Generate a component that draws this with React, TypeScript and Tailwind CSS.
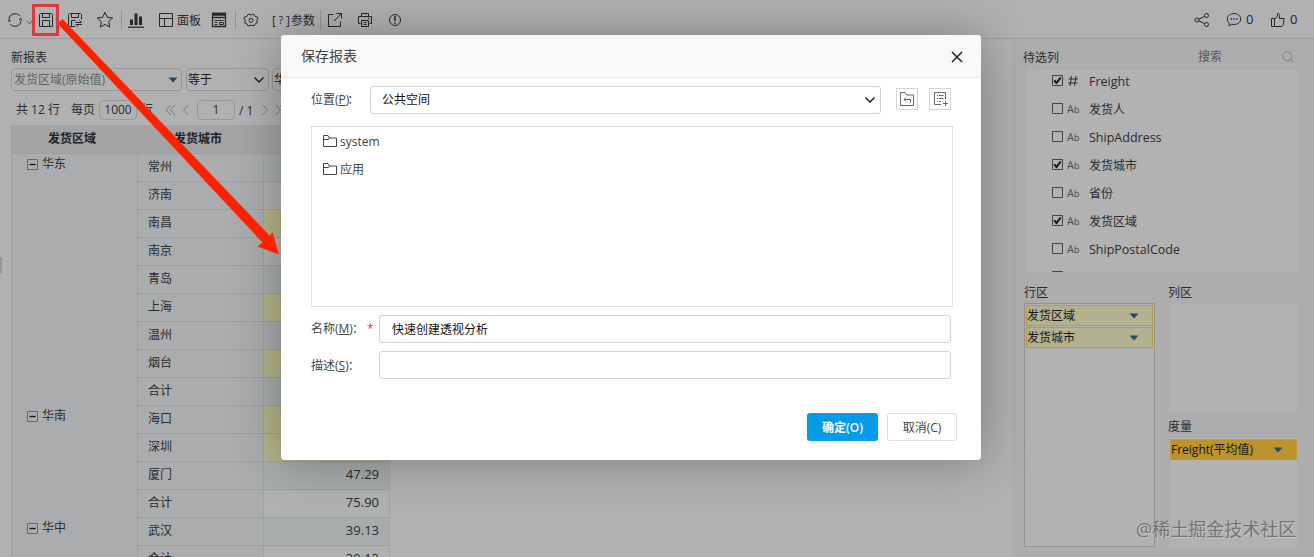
import type { ReactNode } from "react";

const Svg = ({ w = 16, h = 16, children, className = "" }: { w?: number; h?: number; children: ReactNode; className?: string }) => (
  <svg width={w} height={h} viewBox={`0 0 ${w} ${h}`} fill="none" stroke="currentColor" strokeWidth="1" className={`block shrink-0 ${className}`}>
    {children}
  </svg>
);

const Divider = ({ className = "" }: { className?: string }) => <div className={`h-5 w-px shrink-0 bg-[#949494] ${className}`} />;

const Caret = ({ className = "" }: { className?: string }) => (
  <Svg w={10} h={6} className={className}>
    <path d="M0.5 0.5h9L5 5.5z" fill="#1f4a66" stroke="none" />
  </Svg>
);

const Chevron = ({ className = "" }: { className?: string }) => (
  <Svg w={12} h={8} className={className}>
    <path d="M1.5 1.5l4.500 4.500 4.500-4.500" strokeWidth="1.3" />
  </Svg>
);

const Toolbar = () => (
  <header className="flex h-[39px] shrink-0 items-center border-b border-[#9c9c9c] pl-[7px] pr-[17px] pt-[2px] text-[#25282d]">
    <Svg>
      <path d="M1.800 7.500A6.300 6.300 0 0 1 12.800 3.700M14.200 8.500A6.300 6.300 0 0 1 3.200 12.300" />
      <path d="M13.800 5.500L14.300 8 12 7.300M2.200 10.500L1.700 8 4 8.700" strokeWidth="0.800" />
    </Svg>
    <Svg w={7} h={5} className="ml-[3px] mt-1 text-[#555]">
      <path d="M0.8 0.8l2.7 3 2.7-3" />
    </Svg>
    <div className="-ml-px flex h-8 w-[27px] shrink-0 items-center justify-center border-[3px] border-[#d93c40]">
      <Svg>
        <path d="M2.500 1.500h11l1 1v12h-13v-12zM4.500 1.500v4h7v-4M4.500 14.500v-6h7v6" />
      </Svg>
    </div>
    <Svg className="ml-2">
      <path d="M14.500 7.500v-5l-1-1h-11l-1 1v12H8M4.500 1.500v4h7v-4M4.500 14.500v-6h4M8.500 10.500h6l-2-2M15 12.500H9l2 2" />
    </Svg>
    <Svg w={18} h={18} className="ml-[13px]">
      <path d="M9 1.3l2.300 5 5.400.6-4 3.700 1.100 5.500L9 13.400l-4.800 2.700 1.100-5.500-4-3.700 5.400-.6z" />
    </Svg>
    <Divider className="ml-[7px]" />
    <Svg w={16} h={16} className="ml-[6px]">
      <path d="M2 7.500h3V13H2zM6.500 1.500h3V13h-3zM11 4.500h3V13h-3z" fill="currentColor" stroke="none" />
      <path d="M0 15.200h16" strokeWidth="1.300" />
    </Svg>
    <Svg w={16} h={16} className="ml-[14px]">
      <path d="M1.500 1.500h13v13h-13zM1.500 6.500h13M6.500 6.500v8" />
    </Svg>
    <span className="ml-[3px] w-6 shrink-0 whitespace-nowrap pt-[2px]">面板</span>
    <Svg w={16} h={16} className="ml-[10px]">
      <path d="M1.500 1.500h13v13h-13z" strokeWidth="1.300" />
      <path d="M1 1.500h14M1 3h14M1 5.500h14" strokeWidth="1.400" />
      <path d="M3.500 8.500h9M3.500 10.500h3M3.500 12.500h3M8.500 10.500h4v2h-4z" />
    </Svg>
    <Divider className="ml-[8px]" />
    <Svg w={16} h={16} className="ml-[7px]">
      <path d="M5.500 2L8 3l2.500-1 1.700 2.600 2.600.6v2.300L13.500 8.500l1 2.200-2.300 1.100-1.200 2.200-3-.8-3 .8-1.200-2.200-2.300-1.100 1-2.200L1.200 7.500V5.200l2.600-.6z" />
      <circle cx="8" cy="8.300" r="2" />
    </Svg>
    <span className="ml-[13px] flex w-[18px] shrink-0 items-center justify-between pt-px">
      <span>[</span>
      <span className="text-[10px]">?</span>
      <span>]</span>
    </span>
    <span className="ml-[1px] w-6 shrink-0 whitespace-nowrap pt-[2px]">参数</span>
    <Divider className="ml-[5px]" />
    <Svg className="ml-[6px]">
      <path d="M6.500 2.500h-5v12h12v-5M9.500 1.500h5v5M14.500 1.500L7 9" />
    </Svg>
    <Svg className="ml-[14px]">
      <path d="M4.500 4.500v-3h7v3M3.500 11.500h-2v-7h13v7h-2M4.500 8.500h7v6h-7zM6.500 10.500h3M6.500 12.500h3M11 6.500h1.500" />
    </Svg>
    <Svg className="ml-[14px]">
      <circle cx="8" cy="8" r="5.500" />
      <path d="M8 4v5M8 10.500v1.500" strokeWidth="1.500" />
    </Svg>
    <div className="ml-auto flex items-center">
      <Svg>
        <circle cx="3" cy="8" r="2" />
        <circle cx="12.500" cy="3.500" r="2" />
        <circle cx="12.500" cy="12.500" r="2" />
        <path d="M4.900 7.200l5.800-2.800M4.900 8.900l5.800 2.800" />
      </Svg>
      <Svg className="ml-4">
        <path d="M8 1.500c3.800 0 6.700 2.400 6.700 5.500s-2.900 5.500-6.700 5.500c-.8 0-1.500-.1-2.200-.3L3 14l.3-2.900C2.100 10.100 1.300 8.600 1.300 7c0-3.100 2.900-5.500 6.700-5.500z" />
        <path d="M4.500 7h1.500M7.300 7h1.500M10.100 7h1.500" strokeWidth="1.500" />
      </Svg>
      <span className="ml-1 w-[7px] text-[13px]">0</span>
      <Svg className="ml-[17px]">
        <path d="M1.500 6.500h3v8h-3zM4.500 7.500L7.500 4V1.500c1.700-.3 2.300.8 2.200 2.300L9.300 6.500h4.900l-1 6.500-1.200 1.500H4.500" />
      </Svg>
      <span className="ml-1 w-[7px] text-[13px]">0</span>
    </div>
  </header>
);

const Filters = () => (
  <div className="flex h-[86px] flex-col">
    <div className="mt-[10px] h-[18px] leading-[18px]">新报表</div>
    <div className="mt-px flex h-[23px] text-[#17191c]">
      <div className="flex w-[171px] items-center justify-between rounded-sm border border-[#989898] pl-[2px] pr-[3px] text-[#606468]">
        发货区域(原始值)
        <Caret />
      </div>
      <div className="ml-1 flex w-[83px] items-center justify-between rounded-sm border border-[#989898] pl-[1px] pr-[3px]">
        <span className="pt-px">等于</span>
        <Chevron />
      </div>
      <div className="ml-[3px] flex w-[100px] items-center rounded-sm border border-[#989898] pl-[1px] pt-px">华东</div>
    </div>
    <div className="mt-[8px] flex h-[22px] items-center whitespace-nowrap pl-[5px]">
      <span className="w-[55px]">共 12 行</span>
      <span className="w-7">每页</span>
      <span className="flex h-5 w-[38px] items-center justify-center rounded-sm border border-[#989898]">1000</span>
      <span className="ml-1 w-[24px]">行</span>
      <Svg w={11} h={12} className="text-[#777]"><path d="M5.500 1L1 6l4.500 5M10 1L5.500 6l4.500 5" /></Svg>
      <Svg w={8} h={12} className="ml-[6px] text-[#777]"><path d="M6.500 1L1.500 6l5 5" /></Svg>
      <span className="ml-[7px] flex h-5 w-[38px] items-center justify-center rounded-sm border border-[#989898]">1</span>
      <span className="ml-1 w-[22px] pt-px">/ 1</span>
      <Svg w={8} h={12} className="text-[#777]"><path d="M1.500 1l5 5-5 5" /></Svg>
      <Svg w={11} h={12} className="ml-[6px] text-[#777]"><path d="M1 1l4.500 5L1 11M5.500 1L10 6l-4.500 5" /></Svg>
    </div>
  </div>
);

type Row = { city: string; value: string; hot?: boolean };
const regions: { name: string; rows: Row[] }[] = [
  {
    name: "华东",
    rows: [
      { city: "常州", value: "" },
      { city: "济南", value: "" },
      { city: "南昌", value: "", hot: true },
      { city: "南京", value: "" },
      { city: "青岛", value: "" },
      { city: "上海", value: "", hot: true },
      { city: "温州", value: "" },
      { city: "烟台", value: "", hot: true },
      { city: "合计", value: "" },
    ],
  },
  {
    name: "华南",
    rows: [
      { city: "海口", value: "", hot: true },
      { city: "深圳", value: "", hot: true },
      { city: "厦门", value: "47.29" },
      { city: "合计", value: "75.90" },
    ],
  },
  { name: "华中", rows: [{ city: "武汉", value: "39.13" }, { city: "合计", value: "39.13" }] },
];

const PivotTable = () => (
  <div className="w-[379px] border-l border-[#9fa1a3]">
    <div className="flex h-7 items-center bg-[#a2a4a6] text-center font-bold text-[#202326]">
      <div className="w-[120px]">发货区域</div>
      <div className="w-[132px]">发货城市</div>
    </div>
    {regions.map((region) => (
      <div key={region.name} className="-mb-px flex border-t border-[#9c9ea1]">
        <div className="flex w-[126px] gap-1 border-r border-[#9c9ea1] bg-[#abacae] pl-[15px]">
          <Svg w={11} h={11} className="mt-[5px]">
            <path d="M0.500 0.500h10v10h-10z" stroke="#62686e" />
            <path d="M2.500 5.500h6" stroke="#111" strokeWidth="1.300" />
          </Svg>
          <span className="h-[18px] leading-[20px]">{region.name}</span>
        </div>
        <div className="flex-1">
          {region.rows.map((row, i) => (
            <div key={i} className="flex h-7 border-b border-[#9c9ea1]">
              <div className="flex w-[126px] items-center border-r border-[#a0a2a4] bg-[#abacae] pb-px pl-[10px]">{row.city}</div>
              <div className={`flex flex-1 items-center justify-end border-r border-[#a0a2a4] pb-px pr-[10px] text-[13px] ${row.hot ? "bg-[#b3b38a]" : i % 2 ? "bg-[#b0b1b1]" : "bg-[#a8acac]"}`}>{row.value}</div>
            </div>
          ))}
        </div>
      </div>
    ))}
  </div>
);

const fields = [
  { name: "Freight", on: true, num: true },
  { name: "发货人", cjk: true },
  { name: "ShipAddress" },
  { name: "发货城市", on: true, cjk: true },
  { name: "省份", cjk: true },
  { name: "发货区域", on: true, cjk: true },
  { name: "ShipPostalCode" },
];

const Tag = ({ label, strong = false }: { label: string; strong?: boolean }) => (
  <div className={`flex h-[21px] items-center justify-between border pr-[13px] text-[#15181b] ${strong ? "border-[#c29934] bg-[#bd932b]" : "border-[#bf9a3c] bg-[#b4b18e]"}`}>
    {label}
    <Caret />
  </div>
);

const FieldPanel = () => (
  <aside className="w-[302px] shrink-0 bg-[#adadad] pl-3">
    <div className="mt-2 flex h-[22px] items-center pr-[20px]">
      <span className="-ml-px w-[175px]">待选列</span>
      <span className="pb-[2px] text-[#55585b]">搜索</span>
      <Svg w={12} h={12} className="mb-[3px] ml-auto text-[#7b7d80]">
        <circle cx="5.300" cy="5.300" r="4.500" />
        <path d="M8.700 8.700l2.500 2.500" />
      </Svg>
    </div>
    <div className="ml-[2px] mt-px h-[202px] w-[272px] overflow-hidden bg-[#b2b2b2] pl-[26px]">
      <div className="-mt-[3px]">
        {fields.map((f) => (
          <div key={f.name} className="flex h-7 items-center">
            <Svg w={11} h={11} className="mb-[2px]">
              <path d="M0.500 0.500h10v10h-10z" stroke="#454545" />
              {f.on && <path d="M2.200 5.300l2.300 2.700 4.200-5.500" stroke="#111" strokeWidth="2" />}
            </Svg>
            {f.num ? (
              <Svg w={12} h={12} className="ml-[4px] mr-[10px]">
                <path d="M4.500 1L3 11M9 1L7.500 11M1.500 4h9.500M1 8h9.500" />
              </Svg>
            ) : (
              <span className="ml-[4px] w-[22px] pb-px leading-none text-[#414b50]">
                <span className="text-[11px]">A</span>
                <span className="text-[9px]">b</span>
              </span>
            )}
            <span className={f.cjk ? "pt-px text-[12px]" : "pt-[2px] text-[12.5px]"}>{f.name}</span>
          </div>
        ))}
        <Svg w={11} h={11} className="mt-[8px]">
          <path d="M0.500 0.500h10v10h-10z" stroke="#454545" />
        </Svg>
      </div>
    </div>
    <div className="mt-[11px] flex">
      <div className="w-[144px]">
        <div className="h-5 leading-5">行区</div>
        <div className="flex h-[244px] w-[131px] flex-col gap-px border border-[#919395] bg-[#b2b2b2] p-px">
          <Tag label="发货区域" />
          <Tag label="发货城市" />
        </div>
      </div>
      <div>
        <div className="h-5 leading-5">列区</div>
        <div className="ml-[2px] mt-px h-[108px] w-[127px] bg-[#b2b2b2]" />
        <div className="mt-[5px] h-5 leading-5">度量</div>
        <div className="ml-[2px] mt-px h-[109px] w-[127px] bg-[#b2b2b2] pt-px">
          <Tag label="Freight(平均值)" strong />
        </div>
      </div>
    </div>
  </aside>
);

const Folder = ({ name }: { name: string }) => (
  <div className="flex h-[28px] items-center gap-[3px]">
    <Svg w={14} h={12} className="mb-[3px]">
      <path d="M0.500 11.500v-11h4.500l1.500 2.500h7v8.500zM0.500 4.500h5l1-1.500" />
    </Svg>
    <span>{name}</span>
  </div>
);

const SaveDialog = () => (
  <div className="absolute left-[281px] top-[35px] h-[425px] w-[700px] rounded-sm bg-white text-[#444] shadow-[1px_1px_50px_rgba(0,0,0,0.3)]">
    <div className="flex h-[43px] items-center justify-between rounded-t-sm border-b border-[#e9e9e9] bg-[#f8f8f8] pl-5 pr-[18px] text-[14px]">
      <span className="pb-px">保存报表</span>
      <Svg w={12} h={12} className="mt-[2px] text-[#222]">
        <path d="M1 1l10 10M11 1L1 11" strokeWidth="1.500" />
      </Svg>
    </div>
    <div className="mt-2 flex h-7 items-center pl-[30px]">
      <span className="w-[59px] whitespace-nowrap">位置(<u>P</u>)<span className="-ml-[2px]">：</span></span>
      <div className="flex h-7 w-[511px] items-center justify-between rounded-[3px] border border-[#d4d4d4] pl-[11px] pr-[4px] text-[#111]">
        公共空间
        <Chevron />
      </div>
      <div className="mb-[3px] ml-[15px] flex size-[22px] items-center justify-center border border-[#d4d4d4] text-[#666]">
        <Svg w={14} h={14}>
          <path d="M0.500 13.500v-13h4.500l1.500 2.500h7v10.500zM4 7.500h6.500v3M6 5.500L4 7.500 6 9.500" />
        </Svg>
      </div>
      <div className="mb-[3px] ml-[11px] flex size-[22px] items-center justify-center border border-[#d4d4d4] text-[#666]">
        <Svg w={16} h={16} className="ml-px mt-px">
          <path d="M8 13.500H1.500v-12h11v7M4 4.500h1M6 4.500h4.500M4 7.500h1M6 7.500h4.500M4 10.500h1M6 10.500h2M12.500 10v5M10 12.500h5" />
        </Svg>
      </div>
    </div>
    <div className="ml-[30px] mt-3 h-[181px] w-[642px] border border-[#dfdfdf] pl-[11px] pt-px">
      <Folder name="system" />
      <Folder name="应用" />
    </div>
    <div className="mt-2 flex h-7 items-center pl-[30px]">
      <span className="w-[56px] whitespace-nowrap">名称(<u>M</u>)<span className="-ml-px">：</span></span>
      <span className="w-3 text-[#e8353e]">*</span>
      <div className="flex h-7 w-[572px] items-center rounded-[3px] border border-[#d4d4d4] pl-3 pt-px text-[#111]">快速创建透视分析</div>
    </div>
    <div className="mt-2 flex h-7 items-center pl-[30px]">
      <span className="w-[68px] whitespace-nowrap pt-px">描述(<u>S</u>)<span className="-ml-px">：</span></span>
      <div className="h-7 w-[572px] rounded-[3px] border border-[#d4d4d4]" />
    </div>
    <div className="mt-[34px] flex justify-end gap-[9px] pr-6">
      <button className="h-7 w-[71px] rounded-[3px] bg-[#069be8] pt-px font-semibold text-white">确定(O)</button>
      <button className="h-7 w-[70px] rounded-[3px] border border-[#dedede] pt-px">取消(C)</button>
    </div>
  </div>
);

export default function App() {
  return (
    <div className="relative flex h-[557px] w-[1314px] flex-col overflow-hidden bg-[#b1b1b1] font-['Open_Sans','Noto_Sans_CJK_SC',sans-serif] text-[12px] text-[#292c2f]">
      <Toolbar />
      <div className="flex min-h-0 flex-1">
        <div className="flex w-[11px] shrink-0 items-start pt-[218px]">
          <div className="h-4 w-[2px] bg-[#969696]" />
        </div>
        <main className="min-w-0 flex-1">
          <Filters />
          <PivotTable />
        </main>
        <FieldPanel />
      </div>
      <SaveDialog />
      <svg className="pointer-events-none absolute left-0 top-0" width="300" height="270" viewBox="0 0 300 270">
        <path d="M62.500 19L270 236l2.500-4 6.500 22.500-21.500-8 5-4L57.500 23.500z" fill="#ff2000" />
      </svg>
      <div className="absolute left-[1136px] top-[516px] whitespace-nowrap text-[18px] leading-[26px] text-[#747474] [text-shadow:1px_1px_0_#c6c6c6]">@稀土掘金技术社区</div>
    </div>
  );
}
